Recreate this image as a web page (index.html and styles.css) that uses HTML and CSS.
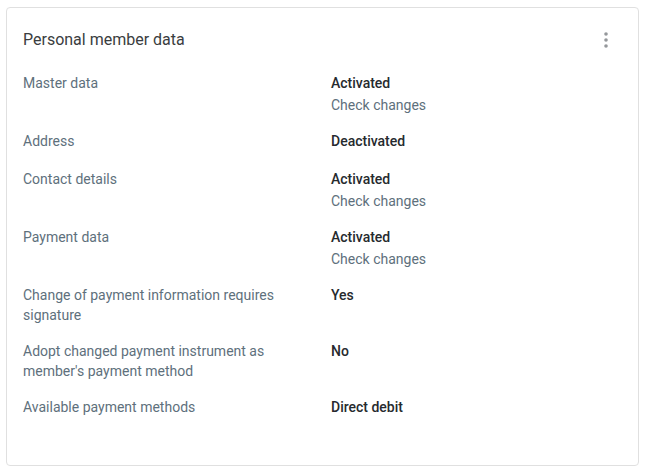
FILE: index.html
```html
<!DOCTYPE html>
<html lang="en">
<head>
<meta charset="utf-8">
<title>Personal member data</title>
<link rel="stylesheet" href="styles.css">
</head>
<body>
<section class="card">
  <header class="card-header">
    <h2 class="card-title">Personal member data</h2>
    <button class="menu-btn" aria-label="More options">
      <svg width="4" height="16" viewBox="0 0 4 16"><circle cx="2" cy="2" r="1.8"/><circle cx="2" cy="8" r="1.8"/><circle cx="2" cy="14" r="1.8"/></svg>
    </button>
  </header>
  <dl class="data-list">
    <dt>Master data</dt>
    <dd><span class="value">Activated</span><a class="sub-link">Check changes</a></dd>
    <dt class="single">Address</dt>
    <dd class="single"><span class="value">Deactivated</span></dd>
    <dt>Contact details</dt>
    <dd><span class="value">Activated</span><a class="sub-link">Check changes</a></dd>
    <dt>Payment data</dt>
    <dd><span class="value">Activated</span><a class="sub-link">Check changes</a></dd>
    <dt>Change of payment information requires signature</dt>
    <dd><span class="value">Yes</span></dd>
    <dt>Adopt changed payment instrument as member's payment method</dt>
    <dd><span class="value">No</span></dd>
    <dt>Available payment methods</dt>
    <dd><span class="value">Direct debit</span></dd>
  </dl>
</section>
</body>
</html>
```
FILE: styles.css
```css
* { box-sizing: border-box; }
html, body { margin: 0; padding: 0; background: #ffffff; }
body {
  padding: 7px 6px 0 6px;
  font-family: Roboto, "Liberation Sans", Arial, sans-serif;
}
.card {
  width: 633px;
  height: 459px;
  border: 1px solid #e0e0e0;
  border-radius: 4px;
  padding: 20px 16px 0 16px;
  background: #fff;
}
.card-header {
  display: flex;
  align-items: center;
  justify-content: space-between;
  height: 24px;
}
.card-title {
  margin: 0;
  font-size: 16px;
  font-weight: 400;
  line-height: 24px;
  color: #3a3d40;
}
.menu-btn {
  border: 0;
  background: none;
  padding: 0;
  margin-right: 14px;
  display: flex;
  fill: #95989b;
}
.data-list {
  margin: 21px 0 0 0;
  display: grid;
  grid-template-columns: 308px 1fr;
  row-gap: 16px;
  font-size: 14px;
  line-height: 20px;
}
.data-list dt {
  color: #5e707c;
  padding-right: 40px;
}
.data-list dd {
  margin: 0;
  display: flex;
  flex-direction: column;
}
.data-list dd.single { padding-bottom: 2px; }
.value {
  font-weight: 500;
  color: #262a2e;
}
.sub-link {
  margin-top: 2px;
  color: #5e707c;
}
```
